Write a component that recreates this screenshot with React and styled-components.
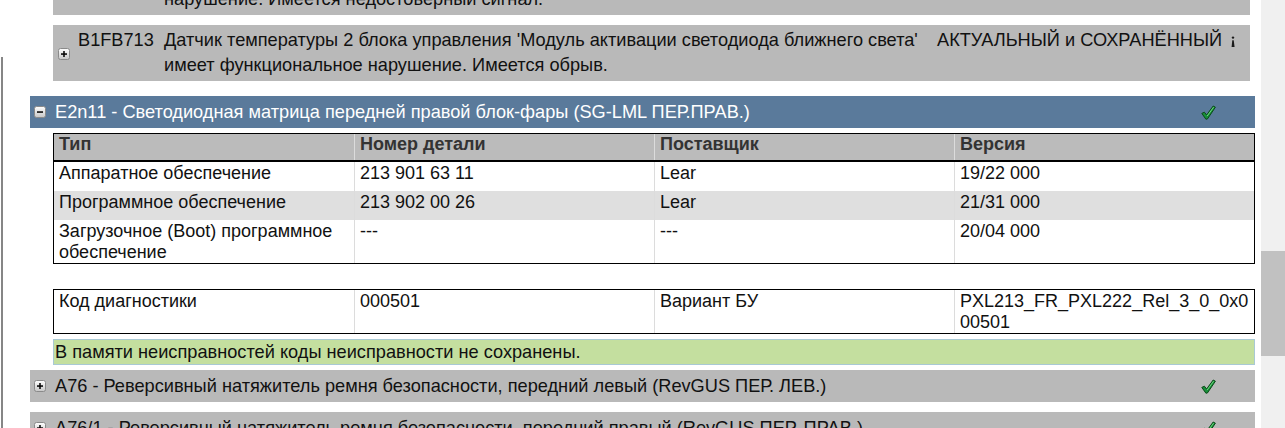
import React from 'react';
import styled, { createGlobalStyle } from 'styled-components';

const GlobalStyle = createGlobalStyle`
  html, body {
    margin: 0;
    padding: 0;
    background: #ffffff;
  }
  body {
    font-family: "Liberation Sans", Arial, sans-serif;
    font-size: 18.2px;
    color: #111;
  }
`;

const faults = [
  {
    code: 'B1FB712',
    text: [
      "Датчик температуры 1 блока управления 'Модуль светодиода' имеет функциональное",
      'нарушение. Имеется недостоверный сигнал.',
    ],
    status: 'АКТУАЛЬНЫЙ и СОХРАНЁННЫЙ',
  },
  {
    code: 'B1FB713',
    text: [
      "Датчик температуры 2 блока управления 'Модуль активации светодиода ближнего света'",
      'имеет функциональное нарушение. Имеется обрыв.',
    ],
    status: 'АКТУАЛЬНЫЙ и СОХРАНЁННЫЙ',
  },
];

const versions = [
  ['Аппаратное обеспечение', '213 901 63 11', 'Lear', '19/22 000'],
  ['Программное обеспечение', '213 902 00 26', 'Lear', '21/31 000'],
  ['Загрузочное (Boot) программное обеспечение', '---', '---', '20/04 000'],
];

function ToggleIcon({ open }) {
  const id = open ? 'tg-o' : 'tg-c';
  return (
    <Toggle>
      <svg width="12" height="12" viewBox="0 0 12 12">
        <defs>
          <linearGradient id={id} x1="0" y1="0" x2="0" y2="1">
            <stop offset="0" stopColor="#ffffff" />
            <stop offset="1" stopColor="#c6c6c6" />
          </linearGradient>
        </defs>
        <rect x="0.5" y="0.5" width="11" height="11" rx="2" fill={`url(#${id})`} stroke="#8a8a8a" />
        <rect x="3" y="5.3" width="6" height="1.5" fill="#000" />
        {!open && <rect x="5.25" y="3" width="1.5" height="6" fill="#000" />}
      </svg>
    </Toggle>
  );
}

function CheckIcon() {
  return (
    <svg width="15" height="15" viewBox="0 0 15 15">
      <path
        d="M0.8 8.4 L3.4 7.2 L5.6 10 L12.2 1 L14.4 2.2 L6.4 14 L4.9 14.2 Z"
        fill="#18903a"
        stroke="#0a4a18"
        strokeWidth="1"
        strokeLinejoin="round"
      />
      <path d="M6.2 11 L12.6 2.2" stroke="#6fd67f" strokeWidth="1" />
    </svg>
  );
}

function InfoIcon() {
  return (
    <svg width="6" height="12" viewBox="0 0 6 12">
      <circle cx="3" cy="1.6" r="1.2" fill="#1a1a1a" />
      <path d="M2.3 4.2 L3.7 4.2 L4.6 11 L1.6 11 Z" fill="#1a1a1a" />
    </svg>
  );
}

export default function App() {
  return (
    <>
      <GlobalStyle />
      <Viewport>
        <Gutter>
          <Rail />
        </Gutter>
        <Content>
          {faults.map((f, i) => (
            <FaultRow key={f.code} $last={i === faults.length - 1}>
              <IconCell>
                <ToggleIcon />
              </IconCell>
              <Cell>{f.code}</Cell>
              <Cell>
                {f.text[0]}
                <br />
                {f.text[1]}
              </Cell>
              <Cell>{f.status}</Cell>
              <InfoCell>
                <InfoIcon />
              </InfoCell>
            </FaultRow>
          ))}

          <UnitHeader $open>
            <ToggleIcon open />
            <Title>E2n11 - Светодиодная матрица передней правой блок-фары (SG-LML ПЕР.ПРАВ.)</Title>
            <CheckIcon />
          </UnitHeader>

          <Grid>
            <HeadRow>
              <Th>Тип</Th>
              <Th>Номер детали</Th>
              <Th>Поставщик</Th>
              <Th>Версия</Th>
            </HeadRow>
            {versions.map((r, i) => (
              <Row key={r[0]} $striped={i % 2 === 1}>
                {r.map((c, j) => (
                  <Td key={j}>{c}</Td>
                ))}
              </Row>
            ))}
          </Grid>

          <Grid $spaced>
            <Row>
              <Td>Код диагностики</Td>
              <Td>000501</Td>
              <Td>Вариант БУ</Td>
              <Td $wrap>PXL213_FR_PXL222_Rel_3_0_0x000501</Td>
            </Row>
          </Grid>

          <Notice>В памяти неисправностей коды неисправности не сохранены.</Notice>

          <UnitHeader>
            <ToggleIcon />
            <Title>A76 - Реверсивный натяжитель ремня безопасности, передний левый (RevGUS ПЕР. ЛЕВ.)</Title>
            <CheckIcon />
          </UnitHeader>
          <UnitHeader $gap>
            <ToggleIcon />
            <Title>A76/1 - Реверсивный натяжитель ремня безопасности, передний правый (RevGUS ПЕР. ПРАВ.)</Title>
            <CheckIcon />
          </UnitHeader>
        </Content>
        <div />
        <Scrollbar>
          <Thumb />
        </Scrollbar>
      </Viewport>
    </>
  );
}

const Viewport = styled.div`
  display: grid;
  grid-template-columns: 30px 1225px 6px 24px;
  height: 428px;
  overflow: hidden;
`;

const Gutter = styled.div`
  display: flex;
  padding-top: 57px;
  padding-left: 1px;
`;

const Rail = styled.div`
  width: 2px;
  background: #868686;
`;

const Content = styled.div`
  display: flex;
  flex-direction: column;
  margin-top: -41px;
`;

const FaultRow = styled.div`
  display: grid;
  grid-template-columns: 22px 86px 773px 288px 28px;
  background: #b9b9b9;
  margin: 0 5px ${(p) => (p.$last ? '15px' : '10px')} 23px;
  line-height: 25px;
  color: #111;
`;

const Cell = styled.div`
  padding: 3px 3px;
  white-space: nowrap;
  overflow: hidden;
`;

const IconCell = styled.div`
  display: flex;
  align-items: center;
  justify-content: center;
  padding-top: 2px;
`;

const InfoCell = styled.div`
  display: flex;
  align-items: flex-start;
  padding: 11px 0 0 8px;
`;

const Toggle = styled.span`
  display: inline-flex;
  width: 12px;
  height: 12px;
`;

const UnitHeader = styled.div`
  display: flex;
  align-items: center;
  height: 32px;
  padding: 0 39px 0 4px;
  background: ${(p) => (p.$open ? '#5a7a9b' : '#b9b9b9')};
  color: ${(p) => (p.$open ? '#ffffff' : '#111')};
  margin-top: ${(p) => (p.$gap ? '10px' : '0')};
  svg {
    flex: none;
  }
`;

const Title = styled.div`
  flex: 1;
  padding-left: 9px;
  white-space: nowrap;
`;

const Grid = styled.div`
  margin: ${(p) => (p.$spaced ? '25px 0 5px 23px' : '5px 0 0 23px')};
  border: 1px solid #000;
  font-size: 18px;
  line-height: 21px;
`;

const Row = styled.div`
  display: grid;
  grid-template-columns: repeat(4, 1fr);
  min-height: 29px;
  background: ${(p) => (p.$striped ? '#dfdfdf' : '#ffffff')};
`;

const HeadRow = styled(Row)`
  min-height: 26px;
  background: #bbbbbb;
  border-bottom: 2px solid #000;
`;

const Td = styled.div`
  padding: 1px 3px 0 5px;
  border-left: 1px solid #dcdcdc;
  word-break: ${(p) => (p.$wrap ? 'break-all' : 'normal')};
  &:first-child {
    border-left: none;
  }
`;

const Th = styled(Td)`
  padding: 0 3px 5px 5px;
  font-weight: bold;
  color: #333;
`;

const Notice = styled.div`
  margin: 0 0 5px 23px;
  padding: 2px 1px 0;
  height: 22px;
  background: #c4df9f;
  border: 1px solid #a9c9d4;
  line-height: 20px;
`;

const Scrollbar = styled.div`
  background: #f0f0f0;
  padding-top: 251px;
`;

const Thumb = styled.div`
  height: 105px;
  background: #c1c1c1;
`;
